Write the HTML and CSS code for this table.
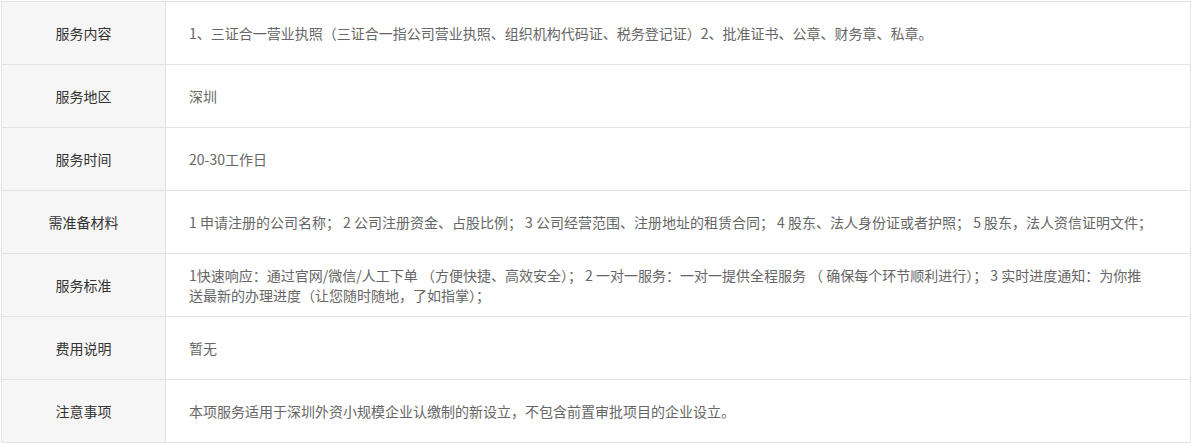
FILE: index.html
```html
<!DOCTYPE html>
<html lang="zh-CN">
<head>
    <meta charset="UTF-8">
    <meta name="viewport" content="width=device-width, initial-scale=1.0">
    <title>服务详情</title>
    <link rel="stylesheet" href="styles.css">
</head>
<body>
    <table class="service-table">
        <tr>
            <th>服务内容</th>
            <td>1、三证合一营业执照（三证合一指公司营业执照、组织机构代码证、税务登记证）2、批准证书、公章、财务章、私章。</td>
        </tr>
        <tr>
            <th>服务地区</th>
            <td>深圳</td>
        </tr>
        <tr>
            <th>服务时间</th>
            <td>20-30工作日</td>
        </tr>
        <tr>
            <th>需准备材料</th>
            <td>1 申请注册的公司名称； 2 公司注册资金、占股比例； 3 公司经营范围、注册地址的租赁合同； 4 股东、法人身份证或者护照； 5 股东，法人资信证明文件；</td>
        </tr>
        <tr>
            <th>服务标准</th>
            <td>1快速响应：通过官网/微信/人工下单 （方便快捷、高效安全）； 2 一对一服务：一对一提供全程服务 （ 确保每个环节顺利进行）； 3 实时进度通知：为你推送最新的办理进度（让您随时随地，了如指掌）；</td>
        </tr>
        <tr>
            <th>费用说明</th>
            <td>暂无</td>
        </tr>
        <tr>
            <th>注意事项</th>
            <td>本项服务适用于深圳外资小规模企业认缴制的新设立，不包含前置审批项目的企业设立。</td>
        </tr>
    </table>
</body>
</html>
```

FILE: styles.css
```css
body {
    margin: 0;
    padding: 1px 0 0 1px;
    font-family: "Noto Sans CJK SC", "Noto Sans", sans-serif;
    font-size: 14px;
    background: #fff;
}

.service-table {
    width: 1190px;
    border-collapse: collapse;
    table-layout: fixed;
}

.service-table th,
.service-table td {
    height: 62px;
    border: 1px solid #e2e2e2;
    line-height: 20px;
    vertical-align: middle;
}

.service-table th {
    width: 163px;
    padding: 0;
    background: #f6f6f6;
    color: #333;
    font-weight: normal;
    text-align: center;
}

.service-table td {
    padding: 0 36px 0 23px;
    color: #666;
    text-align: left;
}
```
